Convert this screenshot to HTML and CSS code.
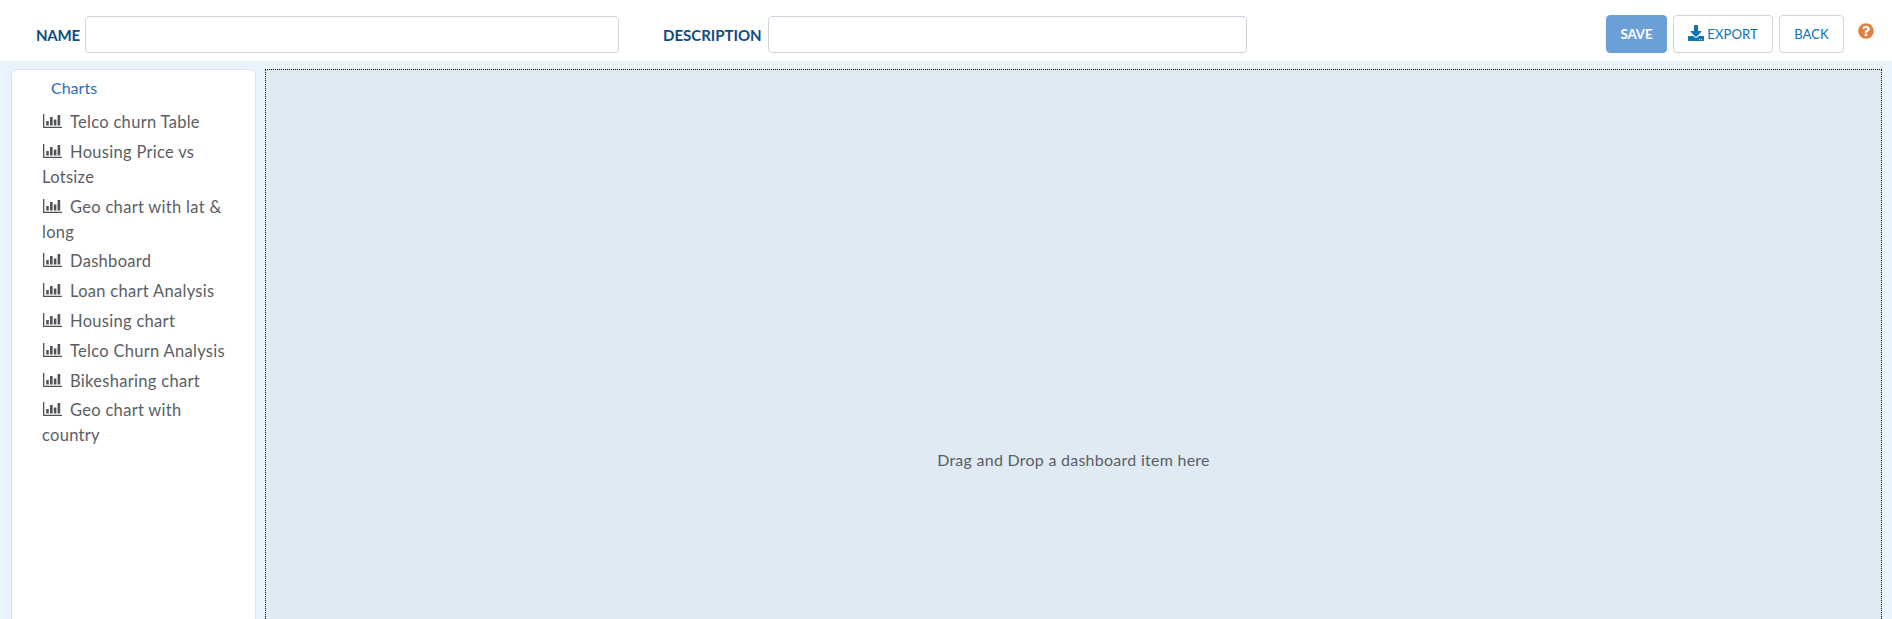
FILE: index.html
```html
<!DOCTYPE html>
<html lang="en">
<head>
<meta charset="utf-8">
<title>Dashboard editor</title>
<link rel="stylesheet" href="styles.css">
</head>
<body>
<svg class="defs" width="0" height="0" aria-hidden="true">
  <symbol id="bar" viewBox="0 0 19 14">
    <path fill="currentColor" d="M0 0h1.3v12.7H19V14H0z"/>
    <path fill="currentColor" d="M3.2 7h2.6v4.6H3.2zM7 3h2.6v8.6H7zM10.8 5.6h2.6v6h-2.6zM14.6 1h2.6v10.6h-2.6z"/>
  </symbol>
</svg>
<header class="topbar">
  <label class="field field-name"><span class="field-label">NAME</span><input class="field-input" type="text"></label>
  <label class="field field-desc"><span class="field-label">DESCRIPTION</span><input class="field-input" type="text"></label>
  <div class="actions">
    <button class="btn btn-save">SAVE</button>
    <button class="btn btn-export"><svg class="export-icon" viewBox="0 0 512 512"><path fill="currentColor" d="M216 0h80c13.3 0 24 10.7 24 24v168h87.7c17.8 0 26.7 21.5 14.1 34.1L269.7 378.3c-7.5 7.5-19.8 7.5-27.3 0L90.1 226.1c-12.6-12.6-3.7-34.1 14.1-34.1H192V24c0-13.3 10.7-24 24-24zm296 376v112c0 13.3-10.7 24-24 24H24c-13.3 0-24-10.7-24-24V376c0-13.3 10.7-24 24-24h146.7l49 49c20.1 20.1 52.5 20.1 72.6 0l49-49H488c13.3 0 24 10.7 24 24zm-124 88c0-11-9-20-20-20s-20 9-20 20 9 20 20 20 20-9 20-20zm64 0c0-11-9-20-20-20s-20 9-20 20 9 20 20 20 20-9 20-20z"/></svg>EXPORT</button>
    <button class="btn btn-back">BACK</button>
    <svg class="help-icon" viewBox="0 0 512 512"><path fill="currentColor" d="M504 256c0 136.997-111.043 248-248 248S8 392.997 8 256C8 119.083 119.043 8 256 8s248 111.083 248 248zM262.655 90c-54.497 0-89.255 22.957-116.549 63.758-3.536 5.286-2.353 12.415 2.715 16.258l34.699 26.31c5.205 3.947 12.621 3.008 16.665-2.122 17.864-22.658 30.113-35.797 57.303-35.797 20.429 0 45.698 13.148 45.698 32.958 0 14.976-12.363 22.667-32.534 33.976C247.128 238.528 216 254.941 216 296v4c0 6.627 5.373 12 12 12h56c6.627 0 12-5.373 12-12v-1.333c0-28.462 83.186-29.647 83.186-106.667 0-58.002-60.165-102-116.531-102zM256 338c-25.365 0-46 20.635-46 46 0 25.364 20.635 46 46 46s46-20.636 46-46c0-25.365-20.635-46-46-46z"/></svg>
  </div>
</header>
<main class="workspace">
  <aside class="sidebar">
    <h2 class="sidebar-title">Charts</h2>
    <ul class="chart-list">
      <li class="chart-item"><svg class="bar-icon"><use href="#bar"/></svg>Telco churn Table</li>
      <li class="chart-item"><svg class="bar-icon"><use href="#bar"/></svg>Housing Price vs Lotsize</li>
      <li class="chart-item"><svg class="bar-icon"><use href="#bar"/></svg>Geo chart with lat &amp; long</li>
      <li class="chart-item"><svg class="bar-icon"><use href="#bar"/></svg>Dashboard</li>
      <li class="chart-item"><svg class="bar-icon"><use href="#bar"/></svg>Loan chart Analysis</li>
      <li class="chart-item"><svg class="bar-icon"><use href="#bar"/></svg>Housing chart</li>
      <li class="chart-item"><svg class="bar-icon"><use href="#bar"/></svg>Telco Churn Analysis</li>
      <li class="chart-item"><svg class="bar-icon"><use href="#bar"/></svg>Bikesharing chart</li>
      <li class="chart-item"><svg class="bar-icon"><use href="#bar"/></svg>Geo chart with country</li>
    </ul>
  </aside>
  <section class="canvas"><p class="canvas-hint">Drag and Drop a dashboard item here</p></section>
</main>
</body>
</html>
```
FILE: styles.css
```css
* { box-sizing: border-box; }
html, body { margin: 0; height: 100%; overflow: hidden; }
body {
  font-family: "Lato", "Liberation Sans", sans-serif;
  background: #fff;
  color: #555;
  display: flex;
  flex-direction: column;
}
.defs { position: absolute; }
.topbar {
  height: 61px;
  flex: none;
  display: flex;
  align-items: flex-start;
  padding: 16px 0 0 36px;
  background: #fff;
}
.field { display: flex; align-items: center; }
.field-label {
  font-size: 15px;
  font-weight: 700;
  color: #0f4c81;
  margin-right: 6px;
}
.field-name .field-label { margin-right: 5px; letter-spacing: -0.2px; }
.field-input {
  height: 37px;
  border: 1px solid #ced4de;
  border-radius: 4px;
  background: #fff;
  display: block;
}
.field-name .field-input { width: 534px; }
.field-desc { margin-left: 44px; }
.field-desc .field-input { width: 479px; }
.actions {
  margin-left: auto;
  display: flex;
  align-items: flex-start;
  padding-right: 18px;
}
.btn {
  height: 38px;
  padding: 0;
  margin: -1px 0 0 6px;
  border: 1px solid #ced4de;
  border-radius: 4px;
  background: #fff;
  color: #0f72b5;
  font: 400 13.2px "Lato", "Liberation Sans", sans-serif;
  display: flex;
  align-items: center;
  justify-content: center;
}
.btn-save {
  width: 61px;
  background: #6b9fd8;
  border-color: #6b9fd8;
  color: #fff;
  font-weight: 700;
  margin-left: 0;
}
.btn-export { width: 100px; }
.btn-back { width: 65px; }
.export-icon { width: 16px; height: 16px; margin-right: 3px; margin-top: -2px; }
.help-icon { width: 16px; height: 16px; color: #e07f3f; margin: 7px 0 0 14px; }
.workspace {
  flex: 1;
  min-height: 0;
  overflow: hidden;
  display: flex;
  align-items: flex-start;
  gap: 9px;
  padding: 8px 10px 0 11px;
  background: #e8f3fe;
}
.sidebar {
  width: 245px;
  height: 782px;
  flex: none;
  background: #fff;
  border: 1px solid #dde3ec;
  border-radius: 6px;
  padding: 7px 0 0 30px;
}
.sidebar-title {
  margin: 0 0 0 9px;
  font-size: 16px;
  font-weight: 400;
  line-height: 22px;
  color: #2a6ebb;
}
.chart-list {
  list-style: none;
  margin: 11px 0 0;
  padding: 0 20px 0 0;
}
.chart-item {
  font-size: 16.5px;
  letter-spacing: 0.3px;
  line-height: 25px;
  margin-bottom: 4.8px;
  color: #5a5e64;
}
.bar-icon {
  width: 19px;
  height: 14px;
  margin: 0 8px 0 1px;
  color: #4f5358;
}
.canvas {
  flex: 1;
  height: 780px;
  min-width: 0;
  display: flex;
  align-items: center;
  justify-content: center;
  background: #e0eaf4;
  border: 1px dotted #111;
}
.canvas-hint {
  margin: 0;
  font-size: 16px;
  letter-spacing: 0.26px;
  color: #5a5e64;
}
```
